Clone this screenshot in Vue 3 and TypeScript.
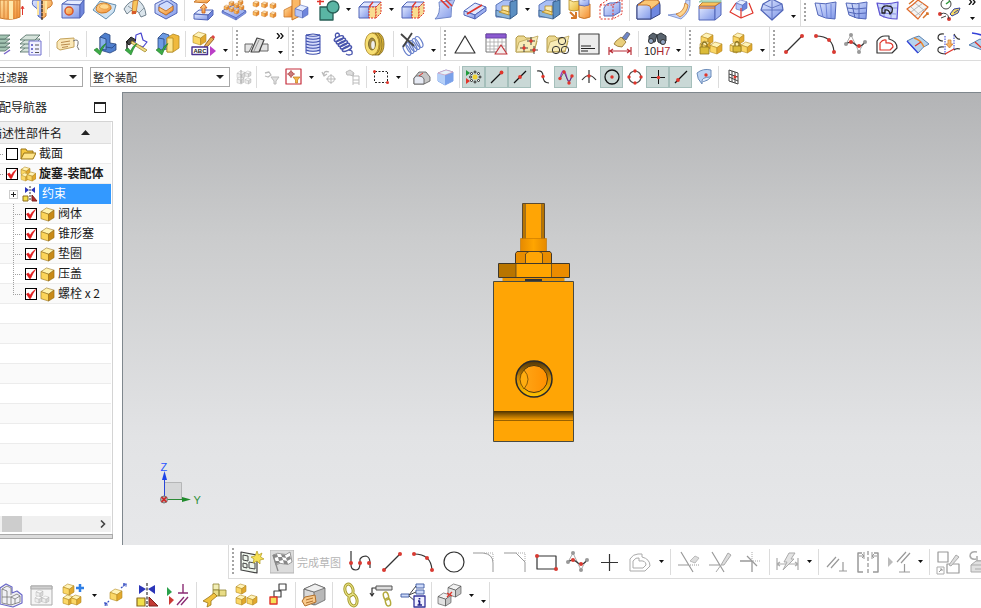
<script setup lang="ts">
import { ref } from 'vue'

interface Tool {
  kind: 'tool' | 'sep' | 'drop' | 'end' | 'grip' | 'more' | 'finish'
  icon?: string
  on?: boolean
}

interface Node {
  name: string
  level: 'top' | 'group' | 'part'
  icon: string
  checked?: boolean
  bold?: boolean
  selected?: boolean
  last?: boolean
}

/* Parses a bar description: "|" separator, "v" menu arrow, "V" arrow closing a bar, ":" grip, ">" overflow. */
function bar(spec: string): Tool[] {
  const marks: Record<string, Tool['kind']> = {
    '|': 'sep', v: 'drop', V: 'end', ':': 'grip', '>': 'more', '#': 'finish',
  }
  return spec.trim().split(/\s+/).map((word) => {
    if (marks[word]) return { kind: marks[word] }
    const on = word.startsWith('+')
    return { kind: 'tool', icon: on ? word.slice(1) : word, on }
  })
}

const featureBar = bar(`tube revolve-cut hole emboss rib pocket | extrude pattern-face pattern mirror-body unite v
  split v trim-body sheet-trim slab-cut shell v shell wrap offset-region | edge-blend face-blend chamfer draft diamond V
  : patch patch-grid patch-loop patch-curves sketch-tools >`)

const toolBar = bar(`layers layer-list | tag | part-check hammer-check assembly-check | label-edit V : section-sheet >
  : coil spring washer | cut-spring V : triangle table folder-points folder-circles note brush-size | find-fit V
  : lock-part lock-parts V : line arc spline offset surface bridge surface-arc`)

const selectBar = bar(`s-assembly | s-filter s-region v s-rotate s-list | s-rect v | s-shade s-cube |
  +s-snap +s-end +s-mid s-curve +s-poles s-cross +s-center s-quadrant +s-point +s-online s-face | s-grid`)

const sketchBar = bar(`: sketch # profile line arc circle fillet corner rectangle spline plus offset-grey v | quick-trim
  quick-extend make-corner | auto-size v | parallel symmetric auto-relate v | pattern-sketch move-sketch`)

const assemblyBar = bar(`wire-parts window-part add-part v move-part mirror-part relate | wrench-part three-parts
  chain-squares | box-tag | link link-under info-tree | clearance v V`)

const f: Record<string, string> = {
  b: 'url(#gBlue)', o: 'url(#gOrange)', y: 'url(#gYellow)', g: 'url(#gGrey)', t: '#5ab5a4',
}
const B = '#5266b8'
const O = '#c9772a'
const Y = '#b38a22'
const K = '#333'
const G = '#ababab'
const R = '#e0352b'

function p(d: string, fill = 'none', stroke = 'none', w = 1, dash = ''): string {
  const extra = dash ? ` stroke-dasharray="${dash}"` : ''
  return `<path d="${d}" fill="${f[fill] ?? fill}" stroke="${stroke}" stroke-width="${w}" stroke-linejoin="round"${extra}/>`
}
function dot(x: number, y: number, c = '#d93a32', r = 2): string {
  return `<circle cx="${x}" cy="${y}" r="${r}" fill="${c}"/>`
}
function ring(x: number, y: number, r: number, c = K, w = 1, fill = 'none'): string {
  return `<circle cx="${x}" cy="${y}" r="${r}" fill="${f[fill] ?? fill}" stroke="${c}" stroke-width="${w}"/>`
}
function cube(x: number, y: number, s: number, top = '#fff3b8', left = '#fbd766', right = '#e2a92e', line = Y): string {
  const a = s * 0.28
  const m = x + s * 0.58
  const w = s < 9 ? 0.4 : 0.6
  return p(`M${x} ${y + a}L${x + s * 0.42} ${y}L${x + s} ${y + a * 0.6}L${m} ${y + a * 1.7}Z`, top, line, w)
    + p(`M${x} ${y + a}L${m} ${y + a * 1.7}V${y + s}L${x} ${y + s * 0.82}Z`, left, line, w)
    + p(`M${m} ${y + a * 1.7}L${x + s} ${y + a * 0.6}V${y + s * 0.74}L${m} ${y + s}Z`, right, line, w)
}
const orangeCube = (x: number, y: number, s: number) => cube(x, y, s, '#ffe3b0', '#fcbb5c', '#e88a2c', O)
const blueCube = (x: number, y: number, s: number) => cube(x, y, s, '#e6edff', '#b4c4f8', '#6f86dd', B)
const greyCube = (x: number, y: number, s: number) => cube(x, y, s, '#fafafa', '#eeeeee', '#d8d8d8', G)
const tick = p('M1 18L4 16L6.500 19Q9 13 13 11.500Q9 17 7 23Z', '#3cab45', '#1f7a2b', 0.6)

const splitBox = p('M1 10L6 5H23L18 10Z', '#dfe6ff', B) + p('M1 10H11V21H1Z', 'b', B)
  + p('M11 10H18V21H11Z', '#f9dc90', R, 1, '2 1') + p('M18 10L23 5V16L18 21Z', '#f6dc98', R, 1, '2 1')
  + p('M11 10L15 5', 'none', R, 1.3)
const lineIcon = p('M4 20L20 4', 'none', K, 1.2) + dot(4, 20) + dot(20, 4)
const folder = p('M1 20V6L3 4H9L11 6H18V9H22L19 20Z', '#ecd88f', '#b29a4a') + p('M4 10L23 4L19 19L1 20Z', '#f8ecb8', '#b9a255', 0.8)
const patchShape = 'M2 6Q12 8 23 5L22 22Q12 22 5 18Z'

const icons: Record<string, string> = {
  tube: p('M1 3H21V20Q12 24 1 21Z', 'o', O) + p('M5 3V21M9 4V22M15 4V22M18 3V21', 'none', '#d98436') + p('M10 4H14V22H10Z', '#ffe9ae')
    + p('M23.500 18V10M22 12L23.500 9L25 12', 'none', R),
  'revolve-cut': p('M3 3Q1 8 5 10Q8 11 8 15V19L12 22V3Z', 'b', B) + p('M12 3V22L16 19V14Q17 10 20 10Q24 7 21 3Z', 'o', O)
    + p('M12 0V24', 'none', K, 1.2, '3 1') + p('M8 4V18M16 4V16', 'none', '#ffe6a0', 2),
  hole: p('M1 7L7 3H23L19 8Z', '#e6ecff', B) + p('M1 7L19 8V21H1Z', 'b', B) + p('M19 8L23 3V16L19 21Z', '#7187dc', B)
    + ring(8, 14, 4, '#d9572b', 1.5, 'o'),
  emboss: p('M1 13L8 4L24 8L22 15L14 22Z', '#cfe2f2', '#668fae') + p('M4 12Q5 6 12 6Q20 7 19 12Q15 17 9 16Q4 15 4 12Z', 'o', '#cf7a22')
    + p('M7 10Q9 6 14 7Q18 8 17 11Q12 14 7 10Z', '#ffd98f', '#e39a3a', 0.7),
  rib: p('M1 12Q6 3 15 3Q22 8 23 18L18 20Q16 14 12 13Q8 12 4 17Z', '#dbe5ec', '#71828e') + p('M5 9L12 14M21 11L16 16', 'none', '#8b9aa5')
    + p('M10 4L15 3L13 16L9 17Z', '#f7c65c', O, 0.8) + p('M9 14H13V17H9Z', '#d65a2a'),
  pocket: p('M1 7L13 1L23 7V16L12 22L1 16Z', 'b', B) + p('M5 8L13 4L19 8V14L12 18L5 14Z', '#cfdcff', B)
    + p('M5 10L12 14L19 9V13L12 18L5 14Z', 'o', O),
  extrude: p('M3 5L8 1H21L16 6Z', 'o', O) + p('M3 17L8 13H22L17 18Z', '#e3eaff', B) + p('M3 17L17 18V23L3 22Z', 'b', B)
    + p('M17 18L22 13V18L17 23Z', '#7187dc', B) + p('M11 16V11H9L13 7L16 11H14V16Z', 'o', '#c25c19', 0.8),
  'pattern-face': p('M0 14L11 8L24 14L14 21Z', 'b', B) + p('M0 14L14 21V23L0 16ZM14 21L24 14V16L14 23Z', '#8197e6', B, 0.6)
    + [[8, 5], [13, 7], [18, 9], [3, 9], [8, 11], [13, 13], [17, 4]].map(([x, y]) => orangeCube(x - 1, y - 1, 5)).join(''),
  pattern: [0, 8.5, 17].map((x) => orangeCube(x, 4 + x * 0.1, 6) + orangeCube(x, 13 + x * 0.1, 6)).join(''),
  'mirror-body': p('M0 13L8 9V20L0 20Z', 'o', O, 0.8) + p('M8 2L16 0V19L8 23Z', '#fbb866', O) + blueCube(11, 8, 13),
  unite: p('M5 10H18V23H5Z', 't', '#275f56', 1.3) + ring(18, 10, 6, '#275f56', 1.3, 't') + p('M5 1V8M2 4.500H9', 'none', R, 1.5),
  split: splitBox,
  'trim-body': splitBox,
  'sheet-trim': p('M7 5Q15 5 23 2Q18 10 19 20L3 22Q9 17 7 5Z', 'b', '#6f86c8') + p('M8 2L17 11M12 1L20 9', 'none', R, 1.5),
  'slab-cut': p('M1 14L12 6L23 10L12 18Z', '#e2eaff', B) + p('M1 14L12 18V22L1 18Z', 'b', B) + p('M12 18L23 10V14L12 22Z', '#9db0f0', B)
    + p('M4 17L19 8', 'none', R, 1.6),
  shell: p('M2 8L10 3H19L16 8V15H8V20H2Z', '#a9bff5', '#5a76b8') + p('M16 5L23 3V17L16 22Z', '#5c8fc2', '#365d8b') + p('M2 13L16 18V22L2 19Z', '#8bb5dc', '#365d8b', 0.8)
    + p('M8 9H15V15L8 13Z', '#fdedb4', Y, 0.8) + p('M5 15L15 18V15L9 13Z', '#f7d77c', Y, 0.8),
  wrap: p('M1 3Q5 6 11 4V13Q6 15 1 13Z', 'y', Y, 0.8) + p('M11 8Q17 10 22 7V20Q16 23 11 20Z', 'o', O) + p('M11 2Q17 4 21 2V8Q17 10 11 8Z', 'b', B, 0.8)
    + p('M2 15L7 20M8 15V21H3', 'none', '#d5792a', 2),
  'offset-region': p('M1 8L10 2H23V17L14 22H1Z', '#fff', R, 1, '2 1.500') + p('M5 11Q8 5 14 6L21 5V15L14 19H5Z', 'b', B)
    + p('M1 8H14V22M14 8L23 2', 'none', R, 1, '2 1.500'),
  'edge-blend': p('M1 8L8 3H21Q24 4 24 8V17L15 22H1Z', '#6f88e0', '#33417f') + p('M1 10Q1 7 6 7H12Q16 8 15 12V22H1Z', 'b', '#33417f')
    + p('M2 8L9 3H21Q24 4 23 6L15 12Q15 8 11 8Z', '#fbc775', O),
  'face-blend': p('M1 18L9 17Q18 17 19 3L23 3Q24 15 14 22Z', '#c6d4fa', '#6f86c8', 0.8) + p('M9 17Q17 15 18 6L21 8Q20 16 13 20Z', '#ffd68e', O, 0.8),
  chamfer: p('M1 9H17V23H1Z', 'b', B) + p('M17 9L23 5V18L17 23Z', '#9db0f0', B) + p('M1 9L5 5H23L17 9Z', '#f8c15c', O)
    + p('M1 5L7 1H23V5H5Z', '#b7dcc8', '#7fbf9e', 0.8) + p('M1 11L17 11', 'none', '#e0762b', 1.3),
  draft: p('M7 6L1 15L12 21L24 16L20 6', 'none', R, 1.2) + blueCube(7, 3, 11) + p('M12 11V21', 'none', R, 1.2),
  diamond: p('M12 2L22 7L23 13L12 23L1 13L3 7Z', 'b', B, 1.2) + p('M3 7L12 11L22 7M12 2V23M1 13H23', 'none', B, 0.8),
  patch: p(patchShape, 'b', B) + p('M7 7L10 20M13 7L14 21M18 7V21', 'none', '#6d82d8'),
  'patch-grid': p(patchShape, 'b', B) + p('M8 7L11 21M15 7V22M3 11Q12 13 22 11M4 15Q12 18 22 16', 'none', '#5266b8'),
  'patch-loop': p(patchShape, '#cdd8fa', '#5a4fd0', 1.2) + p('M9 7V21M16 7V21M3 11L22 11M4 16L21 17', 'none', '#6d70d8', 0.7)
    + p('M7 16V12Q8 8 13 9Q19 9 17 15L15 17Q14 12 10 13V16Z', 'none', '#222', 1.3),
  'patch-curves': p('M1 12Q7 8 12 3L22 10Q17 15 12 22Z', '#f4f4f4', '#e06a2a', 1.2) + p('M5 10L15 19M9 6L19 14M5 15L17 6M9 19L20 11', 'none', '#aaa', 0.8)
    + p('M17 21L22 16M20 16H22V18M3 7L8 3', 'none', '#d8742a', 1.5),
  'sketch-tools': ring(9, 7, 5, '#444') + p('M9 7L13 4', 'none', '#2f9a3a', 1.5) + dot(3, 17) + dot(12, 22) + p('M3 17Q11 14 12 22M4 21L9 19', 'none', '#444')
    + p('M13 17L17 12L23 11L21 16L15 19Z', '#f5d964', '#34429b') + p('M17 16L21 13', 'none', '#34429b'),

  layers: [16, 12, 8, 4].map((y) => p(`M4 ${y + 3}L9 ${y - 1}H22L17 ${y + 3}Z`, '#a3c4b2', '#4d6a60', 0.8)).join('') + p('M16 22L22 18', 'none', '#7a66c9', 1.5),
  'layer-list': [16, 12, 8, 4].map((y) => p(`M1 ${y + 4}L7 ${y - 1}H21L16 ${y + 4}Z`, '#d6e3db', '#4d6a60', 0.8)).join('')
    + p('M10 9H22V23H10Z', '#f1f1ff', '#7372cf') + p('M12 12H14V14H12ZM12 16H14V18H12ZM12 20H14V21H12Z', '#7372cf') + p('M16 13H20M16 17H20M16 20.500H20', 'none', '#555'),
  tag: p('M1 10L4 7L18 6V15L4 18L1 16Z', '#fbe8b8', '#c4a35c') + p('M5 10.500L14 9M5 13L14 12M6 15.500L12 14.500', 'none', '#b98a4d') + p('M17 9Q23 6 22 12Q20 14 23 18', 'none', '#777'),
  'part-check': p('M7 5L12 1L17 3V11L23 12V18L17 21L7 18Z', '#4f7fce', '#26457f', 0.8) + p('M7 5L13 7V18L7 17Z', '#87aeeb', '#26457f', 0.8)
    + p('M13 15L19 16L23 12', 'none', '#26457f', 0.8) + tick,
  'hammer-check': p('M12 3L17 1L19 8L23 10L19 15L11 12Z', '#fff', '#4a47d0', 1.2) + p('M2 10L7 5L12 8L5 13Z', '#444', '#222')
    + p('M8 9L23 18L21 20L7 11Z', '#f0dc86', '#a58b2e', 0.8) + p('M3 9V17', 'none', '#222', 1.5) + tick,
  'assembly-check': p('M3 6L8 1L14 3V17L3 18Z', '#6d9be4', '#26457f', 0.8) + p('M3 6L9 7V17', 'none', '#26457f', 0.8) + p('M12 6L18 2L24 4V16L18 20H12Z', '#f0b93c', Y, 0.8)
    + p('M12 6H18V20H12Z', '#fde48c', Y, 0.8) + tick,
  'label-edit': cube(1, 0, 13) + p('M13 13L19 5L22 7L16 14L12 16Z', '#e8b057', '#7c4b15', 0.8) + p('M19 5L21 3L23 5L22 7Z', '#d44')
    + p('M0 15H15.500V22.500H0Z', '#fff', '#49318f', 1.4) + '<text x="1.500" y="21" font-size="6" font-weight="700" font-family="Liberation Sans, sans-serif" fill="#222">ABC</text>'
    + p('M18 14L24 19L18 24Z', '#bb3fc7'),
  'section-sheet': p('M0 12H8L4 20H0ZM16 12H23V19H15Z', '#e4e4e4', '#666', 1) + p('M6 20L12 6L19 8L14 20Z', '#ddd', '#444', 1.2) + p('M9 19L14 8', 'none', '#999'),
  coil: p('M5 4H19V20H5Z', '#d4dafa') + [3, 6, 9, 12, 15, 18, 21].map((y) => p(`M5 ${y}Q12 ${y + 2.5} 19 ${y}`, 'none', '#3a4bab', 1.2)).join('') + p('M5 3V21M19 3V21M5 3Q12 1 19 3', 'none', '#3a4bab'),
  spring: [[6, 7], [8, 9.5], [10, 12], [12, 14.5], [14, 17]].map(([x, y]) => `<ellipse cx="${x + 1}" cy="${y}" rx="5" ry="2" transform="rotate(-25 ${x} ${y})" fill="none" stroke="#4955ad" stroke-width="1.500"/>`).join('')
    + p('M4 6Q2 1 6 1Q8 2 7 4M17 18Q21 18 20 22Q17 24 14 22', 'none', '#4955ad', 1.3),
  washer: p('M9 1H16Q21 4 21 12Q21 20 16 23H9Z', '#dfb838', '#7c6218', 0.8) + p('M12 1Q17 5 17 12Q17 20 12 23M15 1Q19 5 19 12Q19 20 15 23', 'none', '#7c6a2a', 0.8)
    + '<ellipse cx="9" cy="12" rx="7" ry="11" fill="#f7df74" stroke="#a88322" stroke-width="0.800"/><ellipse cx="9" cy="12" rx="3.500" ry="6" fill="#a38b45" stroke="#6a5a24" stroke-width="0.800"/><ellipse cx="10" cy="13" rx="1.800" ry="4" fill="#eee"/>',
  'cut-spring': [[7, 18], [10, 16], [13, 14], [16, 12], [19, 10]].map(([x, y]) => `<ellipse cx="${x}" cy="${y}" rx="2.800" ry="6" transform="rotate(-30 ${x} ${y})" fill="none" stroke="#6a82cc" stroke-width="1.200"/>`).join('')
    + p('M1 2L14 14M12 1L3 15', 'none', '#444', 1.8),
  triangle: p('M12 4L22 21H2Z', 'none', K, 1.2),
  table: p('M2 2H22V20H2Z', '#fff', '#777') + p('M2 2H22V6H2Z', '#8c5bd0', '#6a40ad') + p('M6 6V20M10 6V20M14 6V20M18 6V20M2 10H22M2 14H22M2 17H22', 'none', '#aaa', 0.8)
    + p('M17 13L23 22H11Z', '#f4eeee', '#c0343a', 1.2),
  'folder-points': folder + p('M16 5V13M12 9H20M9 12V20M5 16H13M19 14V22M15 18H23', 'none', '#444') + dot(16, 9, R, 1.7) + dot(9, 16, R, 1.7) + dot(19, 18, R, 1.7),
  'folder-circles': folder + ring(16, 9, 3.7) + ring(10, 18, 3.7) + ring(19, 18, 3.7),
  note: p('M2 2H22V22H2Z', '#ececec', '#444', 1.2) + p('M4 14H14M4 16.500H18M4 19H11', 'none', '#222'),
  'brush-size': p('M14 6L19 0L22 2L18 8Z', '#6f86c6', '#555', 0.7) + p('M8 9L13 5L18 10L14 15Q9 15 6 12Z', '#e9cf7c', '#8e6f28', 0.8)
    + p('M1 15V23M23 15V23M2 19H22M5 17L2 19L5 21M19 17L22 19L19 21', 'none', '#b92f38', 1.2),
  'find-fit': p('M4 4L8 1L12 3L10 10H4ZM12 3L16 1L21 4V9L17 12L13 10Z', '#59636e', '#2d3339') + ring(6, 9, 2.5, '#333', 1, '#93a8c6') + ring(18, 10, 2.5, '#333', 1, '#93a8c6')
    + '<text x="-1" y="23" font-size="11" font-family="Liberation Sans, sans-serif" fill="#222">10<tspan fill="#a7262c">H7</tspan></text>',
  'lock-part': cube(3, 1, 12) + cube(12, 10, 12) + cube(2, 9, 10) + p('M2 15H11V22H2Z', '#dbbb38', '#8c7522', 0.8) + p('M4 15V12Q6.500 8 9 12V15', 'none', '#8c7522', 1.3),
  'lock-parts': cube(4, 1, 11) + cube(1, 10, 11) + cube(12, 10, 11) + p('M4 14H12V20H4Z', '#dbbb38', '#8c7522', 0.8) + p('M6 14V11Q8 8 10 11V14', 'none', '#8c7522', 1.3),
  line: lineIcon,
  arc: p('M3 4Q20 4 21 20', 'none', K, 1.2) + dot(3, 4) + dot(16, 8) + dot(21, 20),
  spline: p('M2 12L7 3L15 20L20 10', 'none', '#aaa') + p('M2 12Q7 8 12 13Q17 16 21 10', 'none', K, 1.2) + dot(2, 12, '#999') + dot(7, 3, '#999') + dot(15, 20, '#999') + dot(21, 10, '#999')
    + dot(7, 10) + dot(15, 14),
  offset: p('M2 21V9Q5 4 10 4H14V7Q22 9 22 16L17 21Z', '#fff', K, 1.2) + p('M5 18V11Q8 7 11 8V11Q18 10 18 15L15 18Z', 'none', R, 1.2),
  surface: p('M1 9Q8 5 13 4L23 12Q17 14 12 21Z', '#b6d3ee', '#5a82b0') + p('M1 9L12 21', 'none', '#3340d8', 1.3) + p('M8 6Q15 8 18 15', 'none', '#e78a2f', 1.5) + p('M9 14L15 10', 'none', R, 1.2),
  bridge: p('M7 2Q1 1 1 6Q2 9 6 9M7 15Q0 14 1 19Q3 22 9 22M17 2Q20 8 23 7M17 18Q19 16 23 17', 'none', K, 1.2)
    + p('M8 4V22M17 3V17', 'none', '#3340d8', 1, '1.500 1') + p('M8 22L17 17', 'none', R, 1.3) + p('M11 8H14V12H16L12.500 16L9 12H11Z', 'o', O, 0.7),
  'surface-arc': p('M4 1Q14 2 22 7', 'none', '#3340d8', 1.5) + p('M1 13L12 7L22 12V21Z', '#b6d3ee', '#5a82b0') + p('M7 10L16 18', 'none', R, 1.3),

  's-assembly': greyCube(3, 2, 8) + greyCube(3, 8, 7) + greyCube(11, 2, 6) + greyCube(11, 9, 6) + p('M7 1V14', 'none', G),
  's-filter': p('M2 4L6 3L8 6L5 8L2 7', 'none', '#bbb', 1.3) + p('M8 8H16L13 12V15H11V12Z', '#e0e0e0', '#bbb'),
  's-region': p('M0 0H15V15H0Z', '#fff', '#c62e3c', 1.2) + ring(5, 5, 2.2, '#a33') + p('M5 1V9M1 5H9', 'none', '#a33', 0.8) + p('M7 8H14L11.500 11V14H9.500V11Z', '#f3b649', '#c27d1a', 0.7),
  's-rotate': p('M3 7Q2 1 8 3M1 3L3 7L6 5', 'none', '#bbb', 1.3) + ring(10, 10, 3.5, '#bbb') + p('M10 5V15M5 10H15', 'none', '#bbb'),
  's-list': p('M2 3L6 1L10 4L9 7L6 6L3 6Z', '#ddd', '#bbb') + p('M9 7H15V16M9 11H15M9 14H15M9 4V16', 'none', '#bbb'),
  's-rect': p('M2 2.500H14M2 13.500H14M1.500 3V13M14.500 3V13', 'none', '#222', 1, '2 1.500') + dot(1.5, 2.5, R, 1.5) + dot(14.5, 13.5, R, 1.5),
  's-shade': p('M0 9L5 3H12L16 8V12L10 15H0Z', '#c6c6c6', '#555', 0.8) + p('M0 9Q2 6 5 7Q9 7 10 10V15H0Z', '#e6eaf4', '#555', 0.8) + p('M5 7L9 4', 'none', R),
  's-cube': p('M1 4L9 1L16 3V12L8 16L1 12Z', '#7aa1ea', '#7aa1ea') + p('M1 4L8 6V16L1 12Z', '#b5d0f8') + p('M1 4L9 1L16 3L8 6Z', '#e4f2fb', '#e58a9a', 0.5),
  's-snap': p('M0 1L4 4L0 7Z', '#1f9a3a') + p('M0 9L4 12L0 15Z', R) + dot(9, 8, '#f0d233', 2.5) + [[9, 3], [9, 13], [4.5, 8], [14, 8], [5.5, 4.5], [12.5, 4.5], [5.5, 11.5], [12.5, 11.5]].map(([x, y]) => ring(x, y, 1, '#222', 1, '#fff')).join(''),
  's-end': p('M2 14L12 4', 'none', '#111', 1.3) + dot(12.5, 3.5, R, 1.9),
  's-mid': p('M2 14L14 2', 'none', '#111', 1.3) + dot(8, 8, R, 1.9),
  's-curve': p('M2 2Q8 1 8 7Q8 14 14 14', 'none', K, 1.2) + dot(8, 7.5, R, 1.7),
  's-poles': p('M2 10Q5 -4 8 6Q11 18 14 6', 'none', '#9c35c4', 1.3) + p('M2 10L6 3L11 14L14 7', 'none', '#444', 0.7) + dot(2, 9.5, R, 1.7) + dot(6, 3, R, 1.7) + dot(11, 14, R, 1.7) + dot(14, 7, R, 1.7),
  's-cross': p('M1 11Q8 2 15 11M8 1V14', 'none', K, 1.2) + dot(8, 7, R, 1.7),
  's-center': ring(8, 8, 7, '#111', 1.3) + dot(8, 8, R, 1.7),
  's-quadrant': ring(8, 8, 6, '#555', 1.2) + dot(8, 2, R, 1.7) + dot(8, 14, R, 1.7) + dot(2, 8, R, 1.7) + dot(14, 8, R, 1.7),
  's-point': p('M8.500 1V15M1 8.500H15', 'none', '#111', 1) + dot(8.5, 8.5, R, 1.7),
  's-online': p('M2 14L14 2', 'none', '#111', 1.3) + dot(5, 11, R, 1.9),
  's-face': p('M1 4Q7 -1 15 1L15 8Q12 12 6 13V15Q1 10 1 4Z', '#bcd3f2', '#6c8cba') + p('M6 13Q5 8 15 8', '#dfeafa', '#6c8cba') + dot(10, 6, R, 1.7),
  's-grid': p('M4 1L13 4V15L4 12ZM7 2V13M10 3V14M4 5L13 8M4 8L13 12', '#fff', '#444') + dot(10, 8, R, 1.5),

  sketch: p('M2 2L18 5V23L2 20Z', '#eef5ec', '#444', 1.2) + p('M4 5L9 6V11L4 10ZM10 12L16 13V19L10 18ZM4 13L8 14V18L4 17Z', 'none', '#444')
    + p('M18 1L19.500 5L23 3L21.500 7L25 9L21 10L21 14L18 11L14 13L15 9L12 7L16 6Z', '#f6e056', '#b39b1c', 0.7),
  finish: p('M0 0H24V23H0Z', '#dcdcdc', '#b3b3b3') + p('M3 5Q8 2 12 4Q16 6 20 2L22 12Q18 16 14 14Q10 12 6 15Z', '#fff', '#999')
    + p('M3 5L7 4L8 7L4 8ZM11 4L15 5L16 8L12 7ZM8 7L12 7L13 10L9 11ZM16 8L20 6L21 9L17 11ZM5 11L9 11L10 13L6 14ZM13 10L17 11L18 14L14 14Z', '#888') + p('M3 5L8 21', 'none', '#888', 1.3),
  profile: p('M2 1V15Q2 20 7 20Q11 20 11 13V9Q13 6 17 6Q21 7 21 13V18', 'none', K, 1.2) + dot(2, 13) + dot(11, 13) + dot(20, 13),
  circle: ring(12, 12, 10, K, 1.2),
  fillet: p('M0 3H10Q20 4 20 13V22', 'none', '#999') + p('M11 3H20V12', 'none', G, 1, '1 1'),
  corner: p('M0 3H12L21 12V22', 'none', '#999') + p('M12 3H21V12', 'none', G, 1, '1 1'),
  rectangle: p('M2 6H21V19H2Z', 'none', K, 1.2) + dot(2, 6) + dot(21, 19),
  plus: p('M12.500 4V21M4 12.500H21', 'none', '#333', 1.2),
  'offset-grey': p('M2 21V9Q5 4 10 4H14V7Q22 9 22 16L17 21Z', '#fff', G) + p('M5 18V11Q8 7 11 8V11Q18 10 18 15L15 18Z', 'none', G),
  'quick-trim': p('M4 2L16 22M1 15H12', 'none', '#999', 1.2) + p('M13 15H22', 'none', '#999', 1, '1 1') + p('M13 11L18 6L22 8L18 13Z', '#ddd', '#bbb'),
  'quick-extend': p('M4 2L16 22M1 15H12', 'none', '#999', 1.2) + p('M13 15L20 3L23 5L16 15Z', '#ddd', '#aaa') + p('M13 15L8 22', 'none', '#aaa'),
  'make-corner': p('M1 11H13V22', 'none', '#999', 1.3) + p('M8 6L18 16', 'none', '#999', 1.2) + p('M13 2V10M14 11H22', 'none', G, 1, '1 1'),
  'auto-size': p('M1 8V20M22 8V20M1 14H22M4 12L1 14L4 16M19 12L22 14L19 16', 'none', G, 1.2) + p('M13 3H19L15 9H18L7 20L11 12H8Z', '#e4e4e4', G),
  parallel: p('M2 17L11 7M6 18L14 9M14 21H22M18 21V12', 'none', '#999', 1.2),
  symmetric: p('M6 3H2V22H7M18 3H22V22H17', 'none', '#999', 1.5) + p('M12 1V24', 'none', '#999', 1.3, '4 2') + p('M8 2V9M16 2V9M3 6H8M21 6H16M6 4L8 6L6 8M18 4L16 6L18 8', 'none', '#999', 1),
  'auto-relate': p('M1 7L6 12L1 17Z', '#bbb') + p('M10 12L19 2M14 13L23 3M12 22H23M17.500 22V14', 'none', '#999', 1.2),
  'pattern-sketch': p('M2 2H12V12H2ZM11 14H23V23H11Z', 'none', '#999', 1.2) + p('M1 17H8V24H1Z', '#fff', G) + p('M3 22L6 19H4M6 19V21', 'none', '#999') + p('M13 15L20 5L23 7L15 16Z', '#ddd', '#aaa'),
  'move-sketch': p('M10 2Q3 1 3 6Q4 10 9 9M10 6V11H14', 'none', G, 1.5) + p('M4 15L9 11H20V22H4Z', '#e0e0e0', G) + p('M4 15H16M8 19H20', 'none', G),

  'wire-parts': p('M1 5L7 1L13 4V10L18 8L23 12V20L14 24L1 21Z', '#f0f0f4', '#6a68c8', 1.2) + p('M3 6L8 3L12 5V12M3 6V20L12 22V14M3 6L8 8V21M12 14L18 11L21 13V19L12 22M12 14L16 16V21M3 14H12M16 16L21 13', 'none', '#777', 0.8),
  'window-part': p('M1 3H22V22H1Z', '#f5f5f5', G) + p('M1 3H22V6H1Z', '#d0d0d0', G) + greyCube(6, 7, 7) + greyCube(5, 13, 7) + greyCube(12, 13, 7),
  'add-part': cube(2, 1, 11) + cube(2, 12, 10) + cube(10, 12, 10) + p('M19 1V9M15 5H23', 'none', '#2f7fe6', 2.5),
  'move-part': cube(6, 6, 12) + p('M17 5L22 1M19 1H22V4M5 18L1 22M1 19V22H4', 'none', '#3a52c4', 1.3, '2 0.700'),
  'mirror-part': p('M4 2L11 6L4 11ZM20 2L13 6L20 11Z', '#2b35b8') + p('M12 0V24', 'none', K, 1.2, '3 1.500') + p('M2 15H10V23H2Z', '#f2e04a', '#8a6a20', 1.2) + p('M14 14L23 23H14Z', '#c23a34', '#7d201c'),
  relate: p('M1 4L6 9L1 13Z', '#2aa14a') + p('M3 13L8 17L3 22Z', '#cc3a34') + p('M12 10H22M17 1V10M11 22L18 14M15 22L22 14', 'none', '#8b2b74', 1.4),
  'wrench-part': p('M10 1H16V7H10Z', '#f2eeb6', '#8d8030', 0.8) + p('M16 7H23V13H16ZM10 7H16V13H10Z', '#e8dc86', '#8d8030', 0.8) + p('M0 18L6 14L11 10L14 13L8 18V22L4 24L5 20Z', '#f1c23e', '#9a7318', 0.8),
  'three-parts': cube(2, 1, 10) + cube(2, 12, 10) + cube(13, 12, 10),
  'chain-squares': p('M14 1H21V7H14ZM9 8H16V14H9Z', '#fff', '#444', 1.2) + p('M5 14H12V21H5Z', '#f5e158', R, 1.4),
  'box-tag': p('M2 6L13 1L23 5V17L13 22L2 18Z', '#b8b8b8', '#666', 0.8) + p('M2 6L12 9V22L2 18Z', '#d9d9d9', '#666', 0.8) + p('M2 6L13 1L23 5L12 9Z', '#efefef', '#666', 0.8)
    + p('M0 18L3 14L13 12L14 19L3 23Z', '#f8c98a', '#b1702c') + p('M4 17L11 15M4 20L11 18', 'none', '#b1702c'),
  link: '<ellipse cx="10" cy="7" rx="4" ry="6" transform="rotate(-15 10 7)" fill="none" stroke="#a69b2e" stroke-width="3"/><ellipse cx="14" cy="17" rx="4" ry="6" transform="rotate(-15 14 17)" fill="none" stroke="#a69b2e" stroke-width="3"/><ellipse cx="10" cy="7" rx="4" ry="6" transform="rotate(-15 10 7)" fill="none" stroke="#efe98c"/><ellipse cx="14" cy="17" rx="4" ry="6" transform="rotate(-15 14 17)" fill="none" stroke="#efe98c"/>',
  'link-under': p('M6 3H22V7H6Z', '#ddd', '#555') + p('M6 5H2V13M0 10L2 13L4 10', 'none', '#333', 1.2)
    + '<ellipse cx="16" cy="13" rx="2.500" ry="4" transform="rotate(-15 16 13)" fill="none" stroke="#b3a93c" stroke-width="1.500"/><ellipse cx="18" cy="19" rx="2.500" ry="4" transform="rotate(-15 18 19)" fill="none" stroke="#b3a93c" stroke-width="1.500"/>',
  'info-tree': p('M0 11H8V14H0ZM15 1H23V5H15ZM15 7H23V11H15Z', '#cddafa', '#4a64a8') + p('M8 12L15 3M8 12L15 9M8 13L14 18', 'none', '#444') + p('M13 13H24V24H13Z', '#f1f1ff', '#34349a', 1.3)
    + p('M18.500 15V16.500M17 18H18.500V22M16.500 22H21', 'none', '#22228a', 1.7),
  clearance: cube(10, 1, 13, '#f2f2f2', '#e2e2e2', '#c4c4c4', '#444') + cube(0, 10, 13, '#f2f2f2', '#e2e2e2', '#c4c4c4', '#444') + p('M9 10L14 13M14 9L9 14', 'none', R, 1.3),

  't-folder': p('M1 13V3H6L7 5H13V7', '#f6c840', '#9a7414') + p('M1 13L4 7H16L13 13Z', '#ffe58a', '#9a7414'),
  't-assembly': cube(1, 1, 9) + cube(1, 7, 8) + cube(7, 6, 9),
  't-constraint': p('M3 1L7 4L3 7ZM13 1L9 4L13 7Z', '#2b35b8') + p('M8 0V15', 'none', K, 1, '2 1') + p('M1 10H6V15H1Z', '#f2e04a', '#8a6a20') + p('M10 9L15 15H10Z', '#b02a2a', '#7d201c'),
  't-part': cube(1, 1, 14, '#fff3ae', '#fbd45a', '#c88a18', '#8f6a14'),
}

const nodes = ref<Node[]>([
  { name: '截面', level: 'top', icon: 't-folder', checked: false },
  { name: '旋塞-装配体', level: 'top', icon: 't-assembly', checked: true, bold: true },
  { name: '约束', level: 'group', icon: 't-constraint', selected: true },
  { name: '阀体', level: 'part', icon: 't-part', checked: true },
  { name: '锥形塞', level: 'part', icon: 't-part', checked: true },
  { name: '垫圈', level: 'part', icon: 't-part', checked: true },
  { name: '压盖', level: 'part', icon: 't-part', checked: true },
  { name: '螺栓 x 2', level: 'part', icon: 't-part', checked: true, last: true },
])

const bars = [
  { id: 'feature', tools: featureBar },
  { id: 'utility', tools: toolBar },
  { id: 'select', tools: selectBar },
]
const lowerBars = [
  { id: 'sketch', tools: sketchBar },
  { id: 'assembly', tools: assemblyBar },
]

const filterType = ref('无选择过滤器')
const filterScope = ref('整个装配')

function label(icon = ''): string {
  return icon.replace(/^s-/, '').replace(/-/g, ' ')
}
function select(node: Node): void {
  nodes.value.forEach((n) => { n.selected = n === node })
}
</script>

<template>
  <div class="app">
    <svg class="defs" aria-hidden="true">
      <defs>
        <linearGradient id="gBlue" x1="0" y1="0" x2="1" y2="1"><stop offset="0" stop-color="#e3eaff" /><stop offset="1" stop-color="#7f97e8" /></linearGradient>
        <linearGradient id="gOrange" x1="0" y1="0" x2="1" y2="1"><stop offset="0" stop-color="#ffe0a0" /><stop offset="1" stop-color="#f28a2e" /></linearGradient>
        <linearGradient id="gYellow" x1="0" y1="0" x2="1" y2="1"><stop offset="0" stop-color="#fff3b0" /><stop offset="1" stop-color="#e6b02c" /></linearGradient>
        <linearGradient id="gGrey" x1="0" y1="0" x2="1" y2="1"><stop offset="0" stop-color="#f4f4f4" /><stop offset="1" stop-color="#c4c4c4" /></linearGradient>
      </defs>
    </svg>

    <div v-for="row in bars" :key="row.id" class="bar" :class="row.id" role="toolbar" :aria-label="row.id">
      <template v-if="row.id === 'select'">
        <span class="combo type">
          <select v-model="filterType" aria-label="type filter"><option>无选择过滤器</option></select>
        </span>
        <span class="combo scope">
          <select v-model="filterScope" aria-label="scope"><option>整个装配</option></select>
        </span>
      </template>
      <template v-for="(t, i) in row.tools" :key="i">
        <button v-if="t.kind === 'tool'" type="button" class="tool" :class="{ on: t.on }" :aria-label="label(t.icon)" :aria-pressed="row.id === 'select' ? !!t.on : undefined">
          <svg :viewBox="row.id === 'select' ? '0 0 16 16' : '0 0 24 24'" aria-hidden="true" v-html="icons[t.icon!]"></svg>
        </button>
        <span v-else-if="t.kind === 'sep'" class="sep"></span>
        <span v-else-if="t.kind === 'grip'" class="grip"></span>
        <button v-else type="button" class="drop" :class="t.kind" aria-label="more tools">
          <svg v-if="t.kind === 'more'" class="chev" viewBox="0 0 8 6" aria-hidden="true"><path d="M1 0L3.500 3L1 6M4.500 0L7 3L4.500 6" fill="none" stroke="#111" stroke-width="1.300" /></svg>
          <svg class="tri" viewBox="0 0 5 3" aria-hidden="true"><path d="M0 0H5L2.500 3Z" fill="#111" /></svg>
        </button>
      </template>
    </div>

    <main class="middle">
      <aside class="navigator">
        <header class="title">
          <h2>装配导航器</h2>
          <button type="button" class="maximize" aria-label="maximize"></button>
        </header>
        <div class="tree-box">
          <button type="button" class="column">
            <span>描述性部件名</span>
            <svg viewBox="0 0 9 5" aria-hidden="true"><path d="M0 5L4.500 0L9 5Z" fill="#222" /></svg>
          </button>
          <ul class="tree">
            <li v-for="(n, i) in nodes" :key="n.name" :class="[n.level, { last: n.last, selected: n.selected }]" @click="select(n)">
              <span class="guide"></span>
              <button v-if="n.level === 'group'" type="button" class="expander" aria-label="expand">
                <svg viewBox="0 0 9 9" aria-hidden="true"><path d="M4.500 2V7M2 4.500H7" stroke="#222" fill="none" /></svg>
              </button>
              <span v-else class="check">
                <input :id="'node' + i" v-model="n.checked" type="checkbox">
                <svg v-if="n.checked" viewBox="0 0 12 12" aria-hidden="true"><path d="M1.500 6L3.500 5L5 7.500Q7 3.500 10.500 1.500Q7.500 5.500 5.500 10.500H4.500Z" fill="#e01b1b" stroke="#e01b1b" stroke-width="0.700" /></svg>
              </span>
              <svg class="node-icon" viewBox="0 0 16 16" aria-hidden="true" v-html="icons[n.icon]"></svg>
              <label :for="n.level === 'group' ? undefined : 'node' + i" :class="{ bold: n.bold }">{{ n.name }}</label>
            </li>
          </ul>
          <div class="scroll">
            <span class="thumb"></span>
            <button type="button" aria-label="scroll right">
              <svg viewBox="0 0 6 8" aria-hidden="true"><path d="M1 0.500L4.500 4L1 7.500" fill="none" stroke="#444" stroke-width="1.600" /></svg>
            </button>
          </div>
        </div>
        <div class="splitter"></div>
      </aside>

      <section class="canvas" aria-label="model view">
        <svg class="model" viewBox="0 0 82 241" aria-hidden="true">
          <defs>
            <linearGradient id="collar"><stop offset="0" stop-color="#e68a00" /><stop offset=".5" stop-color="#ffa500" /><stop offset="1" stop-color="#e68a00" /></linearGradient>
            <linearGradient id="groove" x1="0" y1="0" x2="0" y2="1"><stop offset="0" stop-color="#4d3200" /><stop offset=".5" stop-color="#a36800" /><stop offset="1" stop-color="#f59c00" /></linearGradient>
            <linearGradient id="bore" x1="0" y1="0" x2="0" y2="1"><stop offset="0" stop-color="#4d3408" /><stop offset=".5" stop-color="#d98c00" /><stop offset="1" stop-color="#ffc400" /></linearGradient>
            <linearGradient id="seat"><stop offset="0" stop-color="#ffa818" /><stop offset="1" stop-color="#ff9000" /></linearGradient>
          </defs>
          <path d="M9.500 77H71.500V81H9.500Z" fill="#e99300" />
          <path d="M32 78H49V82H32Z" fill="#333" />
          <path d="M29.500 2.500H51.500V38.500H29.500Z" fill="#ffa505" stroke="#5c4a30" />
          <path d="M31 3V38M50 3V38" stroke="#b87400" stroke-width="2" />
          <path d="M32.500 3V38M48.500 3V38" stroke="#5c4a30" stroke-width="0.600" />
          <path d="M27.500 37.500H53.500V51H27.500Z" fill="url(#collar)" stroke="#c37600" stroke-width="0.600" />
          <path d="M22.500 52.500L24 50.500H57L58.500 52.500V63H22.500Z" fill="#e78c00" stroke="#41372a" />
          <path d="M32.500 63V53Q34 51.500 36 50.500H46Q49 51 49.500 53V63Z" fill="#ffa505" stroke="#41372a" stroke-width="0.800" />
          <path d="M5.500 62.500H76.500V76.500H5.500Z" fill="#ffa500" stroke="#3e382c" />
          <path d="M6 63H23V76H6Z" fill="#b87500" />
          <path d="M58.500 63H76V76H58.500Z" fill="#ec8c00" />
          <path d="M23 63V76M58.500 63V76" stroke="#3e382c" stroke-width="0.700" />
          <path d="M0.500 80.500H80.500V240.500H0.500Z" fill="#ffa505" stroke="#4a4a40" />
          <path d="M1 210H80V219H1Z" fill="url(#groove)" />
          <path d="M1 219.500H80" stroke="#6b4300" stroke-width="0.700" />
          <circle cx="41" cy="178" r="18" fill="url(#bore)" stroke="#292929" stroke-width="1.500" />
          <circle cx="41" cy="178" r="13.500" fill="url(#seat)" stroke="#3b2c10" stroke-width="0.900" />
          <path d="M31 169Q39 178 31 188Q23 178 31 169Z" fill="#ffac10" stroke="#5b3b00" stroke-width="0.700" />
        </svg>
        <svg class="axes" viewBox="0 0 50 50" aria-hidden="true">
          <path d="M6.500 21.500H23.500V38.500H6.500Z" fill="#d6d7d8" stroke="#b5b6b7" />
          <path d="M6.500 36V14" stroke="#2846d8" />
          <path d="M4 19L6.500 10L9 19Z" fill="#1c44e8" />
          <path d="M8 38.500H26" stroke="#2c8a35" />
          <path d="M24 36L33 38.500L24 41Z" fill="#208a2c" />
          <circle cx="6" cy="38.500" r="3.500" fill="#b9a3a3" stroke="#777" />
          <path d="M3.500 36L8.500 41M8.500 36L3.500 41" stroke="#d22424" stroke-width="1.500" />
          <text x="2.500" y="10" class="z">Z</text>
          <text x="35.500" y="43" class="y">Y</text>
        </svg>
      </section>
    </main>

    <div v-for="row in lowerBars" :key="row.id" class="bar" :class="row.id" role="toolbar" :aria-label="row.id">
      <template v-for="(t, i) in row.tools" :key="i">
        <button v-if="t.kind === 'tool'" type="button" class="tool" :aria-label="label(t.icon)">
          <svg viewBox="0 0 24 24" aria-hidden="true" v-html="icons[t.icon!]"></svg>
        </button>
        <button v-else-if="t.kind === 'finish'" type="button" class="finish" disabled>
          <svg viewBox="0 0 24 24" aria-hidden="true" v-html="icons.finish"></svg>
          <span>完成草图</span>
        </button>
        <span v-else-if="t.kind === 'sep'" class="sep"></span>
        <span v-else-if="t.kind === 'grip'" class="grip"></span>
        <button v-else type="button" class="drop" :class="t.kind" aria-label="more tools">
          <svg class="tri" viewBox="0 0 5 3" aria-hidden="true"><path d="M0 0H5L2.500 3Z" fill="#111" /></svg>
        </button>
      </template>
    </div>
  </div>
</template>

<style>
body {
  overflow: hidden;
  background: #fff;
}
</style>

<style scoped>
.app {
  display: flex;
  flex-direction: column;
  height: 100vh;
  overflow: hidden;
  font-family: "Noto Sans CJK SC", sans-serif;
  font-size: 12px;
  line-height: 18px;
  color: #1c1c1c;
}
.defs {
  position: absolute;
  width: 0;
  height: 0;
}
button {
  padding: 0;
  border: 0;
  background: none;
  color: inherit;
  font: inherit;
}
.bar {
  display: flex;
  flex: none;
  align-items: center;
  box-sizing: border-box;
  overflow: hidden;
}
.tool {
  display: flex;
  flex: 0 0 31px;
  align-items: center;
  justify-content: center;
}
.tool svg {
  width: 24px;
  height: 24px;
  overflow: visible;
}
.sep {
  flex: 0 0 6px;
  height: 26px;
  background: linear-gradient(#dcdcdc, #dcdcdc) center / 1px 100% no-repeat;
}
.grip {
  flex: 0 0 8px;
  align-self: stretch;
  border-left: 1px solid #dcdcdc;
  background: repeating-linear-gradient(#a4a4a4 0 2px, #fff 2px 4px) 3px 3px / 2px calc(100% - 6px) no-repeat;
}
.drop {
  display: flex;
  flex: 0 0 12px;
  flex-direction: column;
  align-items: center;
  justify-content: center;
}
.tri {
  width: 5px;
  height: 3px;
}
.chev {
  width: 8px;
  height: 6px;
}
.drop.end {
  flex-basis: 13px;
  align-self: flex-end;
  padding-bottom: 8px;
}
.drop.more {
  flex-basis: 16px;
  gap: 12px;
}

.feature {
  align-items: flex-end;
  height: 27px;
  margin-left: -5px;
  padding-bottom: 5px;
  overflow: visible;
  border-bottom: 1px solid #dcdcdc;
}
.feature .drop {
  height: 23px;
}
.feature .drop.end {
  height: auto;
  padding-bottom: 3px;
}
.feature .grip {
  margin-bottom: -5px;
}
.utility {
  height: 34px;
  margin-left: -16px;
  border-bottom: 1px solid #dcdcdc;
}
.select {
  height: 32px;
  margin-bottom: -1px;
  margin-left: -41px;
}
.select .tool {
  box-sizing: border-box;
  flex-basis: 23px;
  height: 22px;
}
.select .tool.on {
  border: 1px solid #a5bfbb;
  background: #c9d8d6;
}
.select .tool svg {
  width: 16px;
  height: 16px;
}
.select .sep {
  height: 22px;
}
.combo {
  position: relative;
  display: block;
  flex: none;
}
.combo select {
  width: 100%;
  height: 20px;
  box-sizing: border-box;
  padding: 0 2px;
  border: 1px solid #a8a8a8;
  border-radius: 0;
  background: #fff;
  appearance: none;
  color: #1c1c1c;
  font: 11px/18px "Noto Sans CJK SC", sans-serif;
}
.combo::after {
  position: absolute;
  top: 8px;
  right: 6px;
  border: 4px solid transparent;
  border-top-color: #222;
  border-bottom-width: 0;
  content: "";
  pointer-events: none;
}
.type {
  width: 124px;
  margin-right: 7px;
}
.scope {
  width: 140px;
}

.middle {
  display: flex;
  flex: 1;
  min-height: 0;
}
.navigator {
  display: flex;
  flex: 0 0 122px;
  flex-direction: column;
  box-sizing: border-box;
  padding: 0 9px 6px 0;
}
.title {
  display: flex;
  align-items: center;
  justify-content: space-between;
  height: 28px;
  padding: 1px 7px 0 0;
}
.title h2 {
  margin: 0 0 0 -13px;
  font-size: 12px;
  font-weight: 400;
  white-space: nowrap;
}
.maximize {
  width: 12px;
  height: 11px;
  border: 1px solid #222;
  border-top-width: 2px;
}
.tree-box {
  display: flex;
  flex: 1;
  flex-direction: column;
  min-height: 0;
  padding-right: 1px;
  border-top: 1px solid #d4d4d4;
  border-right: 1px solid #d4d4d4;
}
.column {
  display: flex;
  flex: none;
  align-items: center;
  gap: 19px;
  height: 22px;
  overflow: hidden;
  border-bottom: 1px solid #dedede;
  background: #f0f0f0;
  white-space: nowrap;
}
.column span {
  margin-left: -10px;
}
.column svg {
  width: 9px;
  height: 5px;
}
.tree {
  flex: 1;
  min-height: 0;
  margin: 0;
  padding: 0;
  overflow: hidden;
  background: repeating-linear-gradient(#fff 0 19px, #ececec 19px 20px, #fafafa 20px 39px, #ececec 39px 40px);
  list-style: none;
}
.tree li {
  display: flex;
  align-items: center;
  height: 20px;
}
.guide {
  flex: none;
  align-self: stretch;
  width: 6px;
  background: repeating-linear-gradient(90deg, #a0a0a0 0 1px, transparent 1px 2px) 0 10px / 4px 1px no-repeat;
}
.group .guide {
  width: 9px;
  background: none;
}
.part .guide {
  width: 12px;
  margin-left: 13px;
  background:
    repeating-linear-gradient(#a0a0a0 0 1px, transparent 1px 2px) 0 0 / 1px 100% no-repeat,
    repeating-linear-gradient(90deg, #a0a0a0 0 1px, transparent 1px 2px) 0 10px / 9px 1px no-repeat;
}
.last .guide {
  background-size: 1px 10px, 9px 1px;
}
.check {
  position: relative;
  flex: none;
  width: 12px;
  height: 12px;
}
.check input {
  display: block;
  width: 12px;
  height: 12px;
  margin: 0;
  border: 1px solid #000;
  background: #fff;
  appearance: none;
}
.check svg {
  position: absolute;
  inset: 0;
  pointer-events: none;
}
.expander {
  display: flex;
  flex: none;
  width: 9px;
  height: 9px;
  margin-right: 2px;
  background: #fff;
  outline: 1px solid #ccc;
  outline-offset: -1px;
}
.node-icon {
  flex: none;
  width: 16px;
  height: 16px;
  margin: 0 3px 0 2px;
}
.group .node-icon {
  margin-right: 1px;
}
.part .node-icon {
  width: 15px;
  height: 15px;
  margin: 0 3px;
}
.tree label {
  flex: 1;
  height: 20px;
  line-height: 18px;
  white-space: nowrap;
}
.group label {
  padding-left: 3px;
}
.selected label {
  background: #3399ff;
  color: #fff;
}
.bold {
  font-weight: 700;
}
.scroll {
  display: flex;
  flex: none;
  align-items: center;
  justify-content: space-between;
  height: 16px;
  margin-bottom: 2px;
  padding: 0 5px 0 2px;
  background: #f0f0f0;
}
.thumb {
  width: 20px;
  height: 16px;
  background: #cdcdcd;
}
.scroll button {
  display: flex;
}
.scroll svg {
  width: 6px;
  height: 8px;
}
.splitter {
  flex: none;
  height: 3px;
  border: 1px solid #a9a9a9;
  border-left: 0;
  background: #dcdcdc;
}
.canvas {
  position: relative;
  flex: 1;
  min-width: 0;
  overflow: hidden;
  border-top: 1px solid #7f878d;
  border-left: 1px solid #7f878d;
  background: linear-gradient(#b3b4b6, #cbcccd 32%, #e2e3e5 76%, #e7e8ea);
}
.model {
  position: absolute;
  top: 108px;
  left: 370px;
  width: 82px;
  height: 241px;
}
.axes {
  position: absolute;
  top: 368px;
  left: 35px;
  width: 50px;
  height: 50px;
}
.axes text {
  font: 11px "Liberation Sans", sans-serif;
}
.z {
  fill: #2a55ff;
}
.y {
  fill: #2f8f38;
}

.sketch {
  height: 34px;
  margin-left: 228px;
  border-bottom: 1px solid #dcdcdc;
}
.sketch .grip {
  flex-basis: 6px;
}
.finish {
  display: flex;
  flex: none;
  align-items: center;
  gap: 3px;
  box-sizing: border-box;
  width: 79px;
  padding-left: 4px;
  color: #b4b4b4;
  font-size: 11px;
  white-space: nowrap;
}
.finish svg {
  flex: none;
  width: 24px;
  height: 24px;
}
.assembly {
  height: 29px;
  margin-left: -5px;
  padding-top: 3px;
}
.assembly .drop.end {
  align-self: stretch;
  justify-content: flex-end;
  padding-bottom: 5px;
  border-right: 1px solid #dcdcdc;
}
</style>
